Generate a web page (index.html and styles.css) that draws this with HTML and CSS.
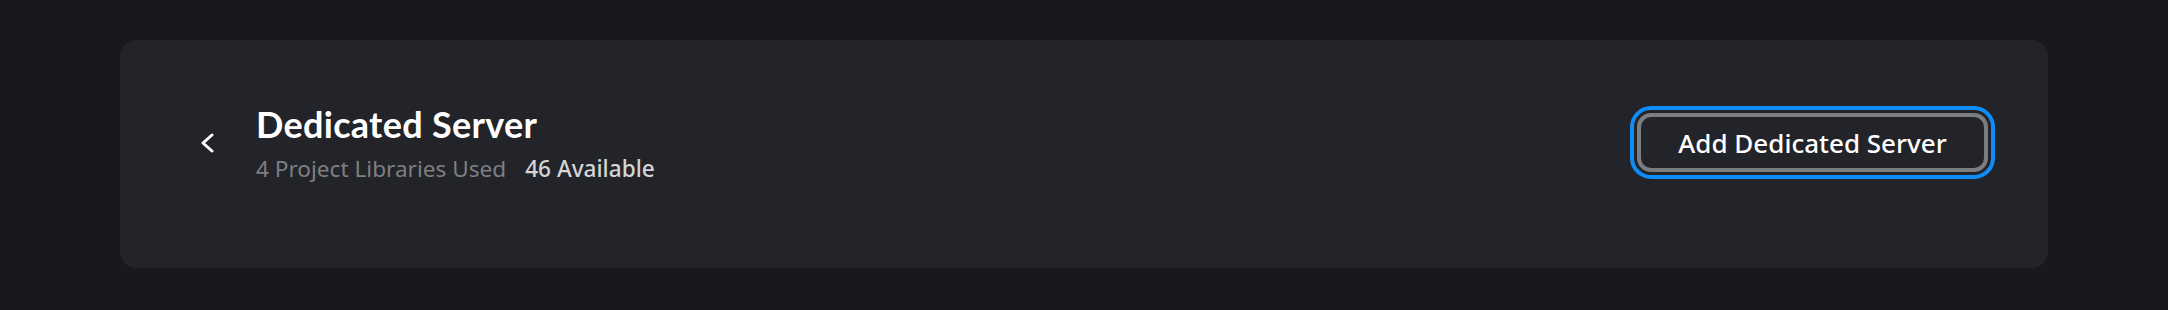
FILE: index.html
```html
<!DOCTYPE html>
<html lang="en">
<head>
    <meta charset="UTF-8">
    <meta name="viewport" content="width=device-width, initial-scale=1.0">
    <title>Dedicated Server</title>
    <link rel="stylesheet" href="styles.css">
</head>
<body>
    <div class="panel">
        <div class="panel-head">
            <button class="back-btn" aria-label="Back">
                <svg width="14" height="20" viewBox="0 0 14 20" fill="none">
                    <path d="M12 2 L3 10 L12 18" stroke="#ffffff" stroke-width="3" stroke-linecap="round" stroke-linejoin="round"/>
                </svg>
            </button>
            <div class="panel-titles">
                <h1 class="panel-title">Dedicated Server</h1>
                <p class="panel-meta">
                    <span class="meta-used">4 Project Libraries Used</span>
                    <span class="meta-available">46 Available</span>
                </p>
            </div>
        </div>
        <button class="add-btn">Add Dedicated Server</button>
    </div>
</body>
</html>
```

FILE: styles.css
```css
* {
    margin: 0;
    padding: 0;
    box-sizing: border-box;
}

body {
    font-family: 'Noto Sans', 'Open Sans', sans-serif;
    background: #18191c;
    color: #ffffff;
    padding: 40px 120px;
}

.panel {
    height: 228px;
    background: #222429;
    border-radius: 16px;
    display: flex;
    justify-content: space-between;
    align-items: center;
    padding: 0 60px 23px 80px;
}

.panel-head {
    display: flex;
    align-items: center;
    gap: 42px;
}

.back-btn {
    background: none;
    border: none;
    padding: 0;
    cursor: pointer;
    display: flex;
}

.back-btn svg {
    display: block;
}

.panel-titles {
    display: flex;
    flex-direction: column;
    gap: 8px;
}

.panel-title {
    font-family: 'Lato', sans-serif;
    font-size: 36px;
    font-weight: 700;
    line-height: 44px;
    letter-spacing: 0.3px;
    color: #ffffff;
}

.panel-meta {
    font-size: 22.6px;
    line-height: 30px;
    display: flex;
    gap: 19px;
}

.meta-used {
    color: #7e7f82;
}

.meta-available {
    color: #d4d5d7;
    font-weight: 500;
}

.add-btn {
    font-family: 'Noto Sans', 'Open Sans', sans-serif;
    font-size: 26px;
    font-weight: 500;
    color: #ffffff;
    background: #222429;
    border: 4px solid #7b7d81;
    border-radius: 14px;
    width: 351px;
    height: 59px;
    outline: 4px solid #0f8cf5;
    outline-offset: 3px;
    cursor: pointer;
}
```
